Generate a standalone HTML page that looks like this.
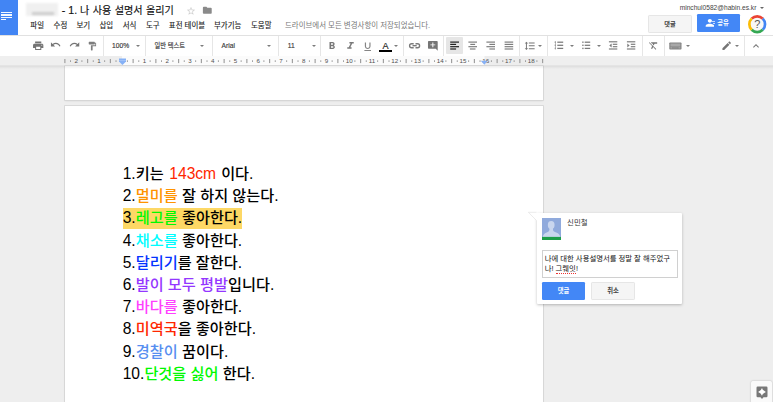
<!DOCTYPE html>
<html lang="ko">
<head>
<meta charset="utf-8">
<title>1. 나 사용 설명서 올리기</title>
<style>
html,body{margin:0;padding:0;}
body{width:773px;height:402px;overflow:hidden;background:#eee;position:relative;font-family:"Liberation Sans","Noto Sans CJK KR",sans-serif;color:#000;}
.abs{position:absolute;}
.t{position:absolute;white-space:nowrap;line-height:1;}
#header{left:0;top:0;width:773px;height:35px;background:#fff;border-bottom:1px solid #e1e1e1;}
#home{left:0;top:0;width:18px;height:35px;background:#4285f4;}
#home i{position:absolute;left:1px;height:1.3px;background:#fff;width:11px;opacity:.95}
.menu{font-size:7.45px;color:#1a1a1a;top:21.7px;-webkit-text-stroke:.12px #222}
#toolbar{left:0;top:36px;width:773px;height:20px;background:#fff;}
.sep{position:absolute;top:36px;width:1px;height:20px;background:#e6e6e6;}
.ic{position:absolute;}
.tb{font-size:6.7px;color:#3a3a3a;top:43.2px;-webkit-text-stroke:.15px #3a3a3a}
.car{position:absolute;width:0;height:0;border-left:2px solid transparent;border-right:2px solid transparent;border-top:2.1px solid #7c7c7c;top:45px;}
.btn{background:#f5f5f5;border:1px solid #e6e6e6;border-radius:1.2px;}
.page{position:absolute;left:65px;width:478px;background:#fff;box-shadow:0 0 0 .8px #d4d4d4,0 1px 2px rgba(0,0,0,.10);}
.ln{position:absolute;left:122.7px;white-space:nowrap;font-size:15.6px;line-height:22px;height:22px;color:#000}
.ln b.k{font-weight:500;font-size:15.2px}
</style>
</head>
<body>
<div class="abs" id="header"></div>
<div class="abs" id="home"><i style="top:11.9px"></i><i style="top:14.3px"></i><i style="top:16.6px"></i><i style="top:19px;width:5.2px"></i></div>
<div class="abs" style="left:25.5px;top:2.5px;width:32px;height:13.5px;background:#f0f0f0;filter:blur(1px)"></div>
<div class="abs" style="left:32px;top:12.3px;width:21.5px;height:3px;background:#cdcdcd;filter:blur(1.1px)"></div>
<div class="t" id="title" style="left:61.8px;top:5.1px;font-size:10.6px;color:#111;-webkit-text-stroke:.13px #111">- 1. <span class="k" style="font-size:10.1px;word-spacing:.6px">나 사용 설명서 올리기</span></div>
<svg class="ic" style="left:186.20px;top:5.70px;width:10px;height:10px" viewBox="0 0 24 24"><path fill="#cfcfcf" d="M22 9.240l-7.190-.620L12 2 9.190 8.630 2 9.240l5.460 4.730L5.820 21 12 17.270 18.180 21l-1.630-7.030L22 9.240zM12 15.400l-3.760 2.270 1-4.280-3.320-2.880 4.380-.380L12 6.100l1.710 4.040 4.380.380-3.320 2.880 1 4.280L12 15.400z"/></svg>
<svg class="ic" style="left:202.30px;top:5.30px;width:10.6px;height:10.6px" viewBox="0 0 24 24"><path fill="#8a8a8a" d="M10 4H4c-1.100 0-1.990.900-1.990 2L2 18c0 1.100.900 2 2 2h16c1.100 0 2-.900 2-2V8c0-1.100-.900-2-2-2h-8l-2-2z"/></svg>
<div class="t menu" id="m0" style="left:30.3px">파일</div>
<div class="t menu" id="m1" style="left:53.6px">수정</div>
<div class="t menu" id="m2" style="left:76.4px">보기</div>
<div class="t menu" id="m3" style="left:99.4px">삽입</div>
<div class="t menu" id="m4" style="left:122.7px">서식</div>
<div class="t menu" id="m5" style="left:146px">도구</div>
<div class="t menu" id="m6" style="left:168.8px">표전 테이블</div>
<div class="t menu" id="m7" style="left:214px">부가기능</div>
<div class="t menu" id="m8" style="left:251px">도움말</div>
<div class="t menu" id="saved" style="left:285px;color:#777;-webkit-text-stroke:0">드라이브에서 모든 변경사항이 저장되었습니다.</div>
<div class="t" id="email" style="left:679.7px;top:4.5px;font-size:6.63px;color:#444">minchul0582@habin.es.kr</div>
<div class="car" style="left:760px;top:7px;border-top-color:#666"></div>
<div class="abs btn" style="left:648px;top:14.5px;width:42px;height:16.5px;"><span class="t" id="cbtn" style="font-weight:bold;font-size:6.2px;color:#3c3c3c;left:50%;top:5.2px;transform:translateX(-50%)">댓글</span></div>
<div class="abs" style="left:696.5px;top:14.3px;width:43.5px;height:17.5px;background:#4387f6;border-radius:1.2px;"></div>
<svg class="ic" style="left:701.70px;top:16.80px;width:12.6px;height:11.6px" viewBox="0 0 24 24" preserveAspectRatio="none"><path fill="#fff" d="M15 12c2.210 0 4-1.790 4-4s-1.790-4-4-4-4 1.790-4 4 1.790 4 4 4zm0 2c-2.670 0-8 1.340-8 4v2h16v-2c0-2.660-5.330-4-8-4z"/></svg>
<div class="abs" style="left:712.3px;top:21.4px;width:2.4px;height:.9px;background:#fff;opacity:.7"></div><div class="abs" style="left:712.8px;top:23.2px;width:2px;height:.9px;background:#fff;opacity:.7"></div>
<div class="t" id="sbtn" style="left:717.2px;top:19.8px;font-weight:bold;font-size:6.35px;color:#fff">공유</div>
<svg class="abs" style="left:747px;top:13.8px;width:20.4px;height:20.4px" viewBox="-10.2 -10.2 20.4 20.4">
<circle r="7.6" fill="#f7f7f7"/>
<g fill="none" stroke-width="2.7">
<path stroke="#ea4335" d="M-5.55 -5.55A7.85 7.85 0 0 1 5.55 -5.55"/>
<path stroke="#4285f4" d="M5.55 -5.55A7.85 7.85 0 0 1 5.55 5.55"/>
<path stroke="#34a853" d="M5.55 5.55A7.85 7.85 0 0 1 -5.55 5.55"/>
<path stroke="#fbbc05" d="M-5.55 5.55A7.85 7.85 0 0 1 -5.55 -5.55"/>
</g>
<text x="0" y="3.9" text-anchor="middle" font-size="11" fill="#555" font-family="Liberation Sans, sans-serif">?</text>
</svg>
<div class="abs" id="toolbar"></div>
<div class="sep" style="left:103.2px"></div>
<div class="sep" style="left:144.9px"></div>
<div class="sep" style="left:212.0px"></div>
<div class="sep" style="left:278.2px"></div>
<div class="sep" style="left:320.2px"></div>
<div class="sep" style="left:403.2px"></div>
<div class="sep" style="left:443.0px"></div>
<div class="sep" style="left:519.3px"></div>
<div class="sep" style="left:547.0px"></div>
<div class="sep" style="left:641.8px"></div>
<div class="sep" style="left:664.2px"></div>
<div class="sep" style="left:743.9px"></div>
<svg class="ic" style="left:31.90px;top:39.80px;width:12.4px;height:11.4px" viewBox="0 0 24 24" preserveAspectRatio="none"><path fill="#757575" d="M19 8H5c-1.66 0-3 1.34-3 3v6h4v4h12v-4h4v-6c0-1.66-1.34-3-3-3zm-3 11H8v-5h8v5zm3-7c-.55 0-1-.45-1-1s.45-1 1-1 1 .45 1 1-.45 1-1 1zm-1-9H6v4h12V3z"/></svg>
<svg class="ic" style="left:50.00px;top:39.40px;width:11.2px;height:11.2px" viewBox="0 0 24 24"><path fill="#757575" d="M12.5 8c-2.65 0-5.05.99-6.9 2.6L2 7v9h9l-3.62-3.62c1.39-1.16 3.16-1.88 5.12-1.88 3.54 0 6.55 2.31 7.6 5.5l2.37-.78C21.08 11.03 17.15 8 12.5 8z"/></svg>
<svg class="ic" style="left:68.70px;top:39.40px;width:11.2px;height:11.2px" viewBox="0 0 24 24"><path fill="#757575" d="M18.4 10.6C16.55 8.99 14.15 8 11.5 8c-4.65 0-8.58 3.03-9.96 7.22L3.9 16c1.05-3.19 4.05-5.5 7.6-5.5 1.95 0 3.73.72 5.12 1.88L13 16h9V7l-3.6 3.6z"/></svg>
<svg class="ic" style="left:87.10px;top:40.60px;width:10.4px;height:10.4px" viewBox="0 0 24 24"><path fill="#7d7d7d" d="M18 4V3c0-.55-.45-1-1-1H5c-.55 0-1 .45-1 1v4c0 .55.45 1 1 1h12c.55 0 1-.45 1-1V6h1v4H9v11c0 .55.45 1 1 1h2c.55 0 1-.45 1-1v-9h8V4h-3z"/></svg>
<div class="t tb" id="zoom" style="left:112px">100%</div>
<div class="car" style="left:136.2px"></div>
<div class="t tb" id="style" style="left:154.5px;font-size:6.25px;top:43.4px">일반 텍스트</div>
<div class="car" style="left:200px"></div>
<div class="t tb" id="font" style="left:221.5px">Arial</div>
<div class="car" style="left:266.6px"></div>
<div class="t tb" id="fsize" style="left:287.8px">11</div>
<div class="car" style="left:311.5px"></div>
<svg class="ic" style="left:325.60px;top:40.00px;width:12px;height:12px" viewBox="0 0 24 24"><path fill="#777" d="M15.6 10.79c.97-.67 1.65-1.77 1.65-2.79 0-2.26-1.75-4-4-4H7v14h7.04c2.09 0 3.71-1.7 3.71-3.79 0-1.52-.86-2.82-2.15-3.42zM10 6.5h3c.83 0 1.5.67 1.5 1.5s-.67 1.5-1.5 1.5h-3v-3zm3.500 9H10v-3h3.500c.83 0 1.500.67 1.500 1.500s-.67 1.500-1.500 1.500z"/></svg>
<svg class="ic" style="left:343.70px;top:40.10px;width:13px;height:11.6px" viewBox="0 0 24 24" preserveAspectRatio="none"><path fill="#7a7a7a" d="M10 4v3h2.21l-3.42 8H6v3h8v-3h-2.21l3.42-8H18V4z"/></svg>
<svg class="ic" style="left:362.30px;top:40.70px;width:11.4px;height:11.4px" viewBox="0 0 24 24"><path fill="#858585" d="M12 17c3.31 0 6-2.69 6-6V3h-2.500v8c0 1.930-1.570 3.500-3.500 3.500S8.500 12.930 8.500 11V3H6v8c0 3.310 2.690 6 6 6zm-7 2v2h14v-2H5z"/></svg>
<div class="t" id="bigA" style="left:382.4px;top:41.6px;font-size:9.1px;color:#222;-webkit-text-stroke:.15px #222">A</div>
<div class="abs" style="left:379px;top:50.3px;width:13.3px;height:1.8px;background:#000"></div>
<div class="car" style="left:394.3px"></div>
<svg class="ic" style="left:426.75px;top:40.15px;width:11.7px;height:11.7px" viewBox="0 0 24 24"><path fill="#757575" d="M21.99 4c0-1.100-.890-2-1.990-2H4c-1.100 0-2 .900-2 2v12c0 1.100.900 2 2 2h14l4 4-.010-18zM17 11h-4v4h-2v-4H7V9h4V5h2v4h4v2z"/></svg>
<div class="abs" style="left:446.3px;top:37.4px;width:16.7px;height:16.4px;background:#e6e6e6;border-radius:1px"></div>
<svg class="abs" style="left:0;top:36px;width:773px;height:20px" viewBox="0 36 773 20"><rect x="450.20" y="41.50" width="8.80" height="1.2" fill="#222"/><rect x="450.20" y="43.80" width="5.90" height="1.2" fill="#222"/><rect x="450.20" y="46.10" width="8.80" height="1.2" fill="#222"/><rect x="450.20" y="48.40" width="5.90" height="1.2" fill="#222"/><rect x="468.40" y="41.52" width="8.60" height="1.15" fill="#7a7a7a"/><rect x="470.30" y="43.82" width="4.80" height="1.15" fill="#7a7a7a"/><rect x="468.40" y="46.12" width="8.60" height="1.15" fill="#7a7a7a"/><rect x="469.90" y="48.42" width="5.60" height="1.15" fill="#7a7a7a"/><rect x="486.40" y="41.52" width="8.60" height="1.15" fill="#7a7a7a"/><rect x="489.40" y="43.82" width="5.60" height="1.15" fill="#7a7a7a"/><rect x="486.40" y="46.12" width="8.60" height="1.15" fill="#7a7a7a"/><rect x="489.40" y="48.42" width="5.60" height="1.15" fill="#7a7a7a"/><rect x="504.60" y="41.52" width="8.60" height="1.15" fill="#7a7a7a"/><rect x="504.60" y="43.82" width="8.60" height="1.15" fill="#7a7a7a"/><rect x="504.60" y="46.12" width="8.60" height="1.15" fill="#7a7a7a"/><rect x="504.60" y="48.42" width="8.60" height="1.15" fill="#7a7a7a"/><rect x="557.30" y="41.58" width="5.90" height="1.25" fill="#7a7a7a"/><rect x="554.70" y="41.45" width="1.20" height="1.5" fill="#8a8a8a"/><rect x="557.30" y="44.67" width="5.90" height="1.25" fill="#7a7a7a"/><rect x="554.70" y="44.55" width="1.20" height="1.5" fill="#8a8a8a"/><rect x="557.30" y="47.77" width="5.90" height="1.25" fill="#7a7a7a"/><rect x="554.70" y="47.65" width="1.20" height="1.5" fill="#8a8a8a"/><rect x="555" y="41.400" width=".7" height="8" fill="#a0a0a0"/><rect x="584.70" y="41.58" width="5.50" height="1.25" fill="#7a7a7a"/><rect x="582.20" y="41.50" width="1.40" height="1.4" fill="#808080"/><rect x="584.70" y="44.67" width="5.50" height="1.25" fill="#7a7a7a"/><rect x="582.20" y="44.60" width="1.40" height="1.4" fill="#808080"/><rect x="584.70" y="47.77" width="5.50" height="1.25" fill="#7a7a7a"/><rect x="582.20" y="47.70" width="1.40" height="1.4" fill="#808080"/><rect x="608.90" y="41.22" width="8.40" height="1.15" fill="#7a7a7a"/><rect x="608.90" y="48.42" width="8.40" height="1.15" fill="#7a7a7a"/><rect x="612.80" y="43.72" width="4.50" height="1.15" fill="#7a7a7a"/><rect x="612.80" y="46.12" width="4.50" height="1.15" fill="#7a7a7a"/><path d="M609.300 45.500l2.300-2v4z" fill="#7a7a7a"/><rect x="626.90" y="41.22" width="8.40" height="1.15" fill="#7a7a7a"/><rect x="626.90" y="48.42" width="8.40" height="1.15" fill="#7a7a7a"/><rect x="630.80" y="43.72" width="4.50" height="1.15" fill="#7a7a7a"/><rect x="630.80" y="46.12" width="4.50" height="1.15" fill="#7a7a7a"/><path d="M629.600 45.500l-2.300-2v4z" fill="#7a7a7a"/><g fill="none" stroke="#7a7a7a" stroke-width="1.350"><path d="M413.700 43.700H411.600A2 2 0 0 0 411.600 47.700H413.700"/><path d="M415.500 43.700H417.600A2 2 0 0 1 417.600 47.700H415.500"/><path d="M412.500 45.700H416.700"/></g></svg>
<svg class="ic" style="left:524.20px;top:39.90px;width:11.6px;height:11.6px" viewBox="0 0 24 24"><path fill="#757575" d="M6 7h2.500L5 3.500 1.500 7H4v10H1.500L5 20.500 8.500 17H6V7zm4-2v2h12V5H10zm0 14h12v-2H10v2zm0-6h12v-2H10v2z"/></svg>
<div class="car" style="left:538.4px"></div>
<div class="car" style="left:570px"></div>
<div class="car" style="left:596.8px"></div>
<svg class="ic" style="left:648.00px;top:40.20px;width:11px;height:11px" viewBox="0 0 24 24"><path fill="#757575" d="M3.270 5L2 6.270l6.970 6.970L6.500 19h3l1.570-3.660L16.730 21 18 19.730 3.550 5.270 3.270 5zM6 5v.180L8.820 8h2.400l-.720 1.680 2.100 2.100L14.210 8H20V5H6z"/></svg>
<svg class="abs" style="left:669px;top:41.800px;width:13px;height:8px" viewBox="0 0 13 8"><rect x=".3" y=".4" width="12.200" height="7.200" rx=".8" fill="#828282"/><rect x="1.400" y="1.500" width="10" height="3" fill="#a8a8a8"/><rect x="1.400" y="5.200" width="2" height="1.300" fill="#a8a8a8"/><rect x="9.400" y="5.200" width="2" height="1.300" fill="#a8a8a8"/><rect x="4" y="5.200" width="4.800" height="1.300" fill="#949494"/></svg>
<div class="car" style="left:686.3px"></div>
<svg class="ic" style="left:720.60px;top:39.80px;width:11.4px;height:11.4px" viewBox="0 0 24 24"><path fill="#757575" d="M3 17.250V21h3.750L17.810 9.940l-3.750-3.750L3 17.250zM20.710 7.040c.390-.390.390-1.020 0-1.410l-2.340-2.340c-.390-.390-1.020-.390-1.410 0l-1.830 1.830 3.750 3.750 1.830-1.830z"/></svg>
<div class="car" style="left:735.2px"></div>
<svg class="ic" style="left:749.50px;top:40.00px;width:12px;height:12px" viewBox="0 0 24 24"><path fill="#757575" d="M12 8l-6 6 1.410 1.410L12 10.830l4.590 4.590L18 14z"/></svg>
<svg class="abs" id="ruler" style="left:0;top:56px;width:773px;height:10px" viewBox="0 0 773 10"><rect x="0" y="0" width="773" height="9.3" fill="#efefef"/><rect x="65" y="0" width="478.5" height="9.3" fill="#ededed"/><rect x="122" y="0" width="362.5" height="9.3" fill="#fbfbfb"/><rect x="0" y="9.3" width="773" height="0.7" fill="#e0e0e0"/><rect x="64.33" y="3" width="1.1" height="4.1" fill="#999"/><rect x="70.01" y="4.4" width="1" height="1.4" fill="#8c8c8c"/><text x="76.20" y="7.3" text-anchor="middle" font-size="6.2" fill="#505050" font-family="Liberation Sans, sans-serif">2</text><rect x="81.39" y="4.4" width="1" height="1.4" fill="#8c8c8c"/><rect x="87.08" y="3" width="1.1" height="4.1" fill="#999"/><rect x="92.76" y="4.4" width="1" height="1.4" fill="#8c8c8c"/><text x="98.95" y="7.3" text-anchor="middle" font-size="6.2" fill="#505050" font-family="Liberation Sans, sans-serif">1</text><rect x="104.14" y="4.4" width="1" height="1.4" fill="#8c8c8c"/><rect x="109.83" y="3" width="1.1" height="4.1" fill="#999"/><rect x="115.51" y="4.4" width="1" height="1.4" fill="#8c8c8c"/><rect x="126.89" y="4.4" width="1" height="1.4" fill="#8c8c8c"/><rect x="132.57" y="3" width="1.1" height="4.1" fill="#999"/><rect x="138.26" y="4.4" width="1" height="1.4" fill="#8c8c8c"/><text x="144.45" y="7.3" text-anchor="middle" font-size="6.2" fill="#505050" font-family="Liberation Sans, sans-serif">1</text><rect x="149.64" y="4.4" width="1" height="1.4" fill="#8c8c8c"/><rect x="155.32" y="3" width="1.1" height="4.1" fill="#999"/><rect x="161.01" y="4.4" width="1" height="1.4" fill="#8c8c8c"/><text x="167.20" y="7.3" text-anchor="middle" font-size="6.2" fill="#505050" font-family="Liberation Sans, sans-serif">2</text><rect x="172.39" y="4.4" width="1" height="1.4" fill="#8c8c8c"/><rect x="178.07" y="3" width="1.1" height="4.1" fill="#999"/><rect x="183.76" y="4.4" width="1" height="1.4" fill="#8c8c8c"/><text x="189.95" y="7.3" text-anchor="middle" font-size="6.2" fill="#505050" font-family="Liberation Sans, sans-serif">3</text><rect x="195.14" y="4.4" width="1" height="1.4" fill="#8c8c8c"/><rect x="200.82" y="3" width="1.1" height="4.1" fill="#999"/><rect x="206.51" y="4.4" width="1" height="1.4" fill="#8c8c8c"/><text x="212.70" y="7.3" text-anchor="middle" font-size="6.2" fill="#505050" font-family="Liberation Sans, sans-serif">4</text><rect x="217.89" y="4.4" width="1" height="1.4" fill="#8c8c8c"/><rect x="223.57" y="3" width="1.1" height="4.1" fill="#999"/><rect x="229.26" y="4.4" width="1" height="1.4" fill="#8c8c8c"/><text x="235.45" y="7.3" text-anchor="middle" font-size="6.2" fill="#505050" font-family="Liberation Sans, sans-serif">5</text><rect x="240.64" y="4.4" width="1" height="1.4" fill="#8c8c8c"/><rect x="246.32" y="3" width="1.1" height="4.1" fill="#999"/><rect x="252.01" y="4.4" width="1" height="1.4" fill="#8c8c8c"/><text x="258.20" y="7.3" text-anchor="middle" font-size="6.2" fill="#505050" font-family="Liberation Sans, sans-serif">6</text><rect x="263.39" y="4.4" width="1" height="1.4" fill="#8c8c8c"/><rect x="269.07" y="3" width="1.1" height="4.1" fill="#999"/><rect x="274.76" y="4.4" width="1" height="1.4" fill="#8c8c8c"/><text x="280.95" y="7.3" text-anchor="middle" font-size="6.2" fill="#505050" font-family="Liberation Sans, sans-serif">7</text><rect x="286.14" y="4.4" width="1" height="1.4" fill="#8c8c8c"/><rect x="291.82" y="3" width="1.1" height="4.1" fill="#999"/><rect x="297.51" y="4.4" width="1" height="1.4" fill="#8c8c8c"/><text x="303.70" y="7.3" text-anchor="middle" font-size="6.2" fill="#505050" font-family="Liberation Sans, sans-serif">8</text><rect x="308.89" y="4.4" width="1" height="1.4" fill="#8c8c8c"/><rect x="314.57" y="3" width="1.1" height="4.1" fill="#999"/><rect x="320.26" y="4.4" width="1" height="1.4" fill="#8c8c8c"/><text x="326.45" y="7.3" text-anchor="middle" font-size="6.2" fill="#505050" font-family="Liberation Sans, sans-serif">9</text><rect x="331.64" y="4.4" width="1" height="1.4" fill="#8c8c8c"/><rect x="337.32" y="3" width="1.1" height="4.1" fill="#999"/><rect x="343.01" y="4.4" width="1" height="1.4" fill="#8c8c8c"/><text x="349.20" y="7.3" text-anchor="middle" font-size="6.2" fill="#505050" font-family="Liberation Sans, sans-serif">10</text><rect x="354.39" y="4.4" width="1" height="1.4" fill="#8c8c8c"/><rect x="360.07" y="3" width="1.1" height="4.1" fill="#999"/><rect x="365.76" y="4.4" width="1" height="1.4" fill="#8c8c8c"/><text x="371.95" y="7.3" text-anchor="middle" font-size="6.2" fill="#505050" font-family="Liberation Sans, sans-serif">11</text><rect x="377.14" y="4.4" width="1" height="1.4" fill="#8c8c8c"/><rect x="382.82" y="3" width="1.1" height="4.1" fill="#999"/><rect x="388.51" y="4.4" width="1" height="1.4" fill="#8c8c8c"/><text x="394.70" y="7.3" text-anchor="middle" font-size="6.2" fill="#505050" font-family="Liberation Sans, sans-serif">12</text><rect x="399.89" y="4.4" width="1" height="1.4" fill="#8c8c8c"/><rect x="405.57" y="3" width="1.1" height="4.1" fill="#999"/><rect x="411.26" y="4.4" width="1" height="1.4" fill="#8c8c8c"/><text x="417.45" y="7.3" text-anchor="middle" font-size="6.2" fill="#505050" font-family="Liberation Sans, sans-serif">13</text><rect x="422.64" y="4.4" width="1" height="1.4" fill="#8c8c8c"/><rect x="428.32" y="3" width="1.1" height="4.1" fill="#999"/><rect x="434.01" y="4.4" width="1" height="1.4" fill="#8c8c8c"/><text x="440.20" y="7.3" text-anchor="middle" font-size="6.2" fill="#505050" font-family="Liberation Sans, sans-serif">14</text><rect x="445.39" y="4.4" width="1" height="1.4" fill="#8c8c8c"/><rect x="451.07" y="3" width="1.1" height="4.1" fill="#999"/><rect x="456.76" y="4.4" width="1" height="1.4" fill="#8c8c8c"/><text x="462.95" y="7.3" text-anchor="middle" font-size="6.2" fill="#505050" font-family="Liberation Sans, sans-serif">15</text><rect x="468.14" y="4.4" width="1" height="1.4" fill="#8c8c8c"/><rect x="473.82" y="3" width="1.1" height="4.1" fill="#999"/><rect x="479.51" y="4.4" width="1" height="1.4" fill="#8c8c8c"/><text x="485.70" y="7.3" text-anchor="middle" font-size="6.2" fill="#505050" font-family="Liberation Sans, sans-serif">16</text><rect x="490.89" y="4.4" width="1" height="1.4" fill="#8c8c8c"/><rect x="496.57" y="3" width="1.1" height="4.1" fill="#999"/><rect x="502.26" y="4.4" width="1" height="1.4" fill="#8c8c8c"/><text x="508.45" y="7.3" text-anchor="middle" font-size="6.2" fill="#505050" font-family="Liberation Sans, sans-serif">17</text><rect x="513.64" y="4.4" width="1" height="1.4" fill="#8c8c8c"/><rect x="519.33" y="3" width="1.1" height="4.1" fill="#999"/><rect x="525.01" y="4.4" width="1" height="1.4" fill="#8c8c8c"/><text x="531.20" y="7.3" text-anchor="middle" font-size="6.2" fill="#505050" font-family="Liberation Sans, sans-serif">18</text><rect x="536.39" y="4.4" width="1" height="1.4" fill="#8c8c8c"/><rect x="542.08" y="3" width="1.1" height="4.1" fill="#999"/><path d="M119 2.400h7v3l-3.500 3.500-3.500-3.500z" fill="#86b1f6"/><rect x="119" y="4.200" width="7" height=".7" fill="#a9c7f9"/><path d="M480.800 4.800h7l-3.500 3.900z" fill="#86b1f6"/></svg>
<div class="abs" style="left:0;top:66px;width:773px;height:2.5px;background:linear-gradient(rgba(0,0,0,.07),rgba(0,0,0,0));z-index:3"></div>
<div class="page" style="top:66px;height:33.5px"></div>
<div class="page" style="top:105.7px;height:300px"></div>
<div class="abs" style="left:122.6px;top:207.8px;width:119.3px;height:21.7px;background:#fdd865"></div>
<div class="ln" id="ln0" style="top:162.90px">1.<b class="k">키는</b> <span style="color:#ff2600;margin-left:1.3px;margin-right:.7px">143cm</span> <b class="k">이다</b>.</div>
<div class="ln" id="ln1" style="top:185.10px">2.<b class="k" style="color:#ff9300">멀미를</b> <b class="k">잘 하지 않는다</b>.</div>
<div class="ln" id="ln2" style="top:207.30px">3.<b class="k" style="color:#00f900">레고를</b> <b class="k">좋아한다</b>.</div>
<div class="ln" id="ln3" style="top:229.50px">4.<b class="k" style="color:#00fdff">채소를</b> <b class="k">좋아한다</b>.</div>
<div class="ln" id="ln4" style="top:251.70px">5.<b class="k" style="color:#0433ff">달리기</b><b class="k">를 잘한다</b>.</div>
<div class="ln" id="ln5" style="top:273.90px">6.<b class="k" style="color:#9437ff">발이 모두 평발</b><b class="k">입니다</b>.</div>
<div class="ln" id="ln6" style="top:296.10px">7.<b class="k" style="color:#ff40ff">바다를</b> <b class="k">좋아한다</b>.</div>
<div class="ln" id="ln7" style="top:318.30px">8.<b class="k" style="color:#ff2600">미역국</b><b class="k">을 좋아한다</b>.</div>
<div class="ln" id="ln8" style="top:340.50px">9.<b class="k" style="color:#578ef0">경찰이</b> <b class="k">꿈이다</b>.</div>
<div class="ln" id="ln9" style="top:362.70px">10.<b class="k" style="color:#00f900">단것을 싫어</b> <b class="k">한다</b>.</div>
<div class="abs" id="cbox" style="left:536.5px;top:212.6px;width:145px;height:91.3px;background:#fff;box-shadow:0 1px 3px rgba(0,0,0,.25);border-radius:1px"></div>
<svg class="abs" style="left:527px;top:211px;width:12px;height:12px" viewBox="0 0 12 12"><path d="M1.4 1.3H10V10z" fill="#fff"/><path d="M9.500 1.300H1.400L9.500 9.500" fill="none" stroke="#ddd" stroke-width=".6"/></svg>
<div class="abs" style="left:536.5px;top:212.8px;width:4px;height:10px;background:#fff"></div>
<svg class="abs" style="left:542px;top:217.800px;width:19.200px;height:22.400px" viewBox="0 0 19.200 22.400"><rect width="19.200" height="22.400" fill="#90aadc"/><ellipse cx="9.200" cy="7" rx="3.400" ry="4.100" fill="#c9d6ee"/><path d="M7.400 9.500h3.600v2.300c0 1.200 1 1.800 2.600 2.400 2.600 1 4.600 2.300 4.600 4.800H.8c0-2.500 2-3.800 4.400-4.800 1.500-.6 2.200-1.200 2.200-2.400z" fill="#c9d6ee"/><rect y="18.900" width="19.200" height="3.500" fill="#1e9e4a"/></svg>
<div class="t" id="cname" style="left:567.1px;top:219.100px;font-size:7.4px;color:#333">신민철</div>
<div class="abs" style="left:542px;top:250px;width:133.5px;height:25.5px;border:1px solid #d0d0d0;background:#fff;box-sizing:content-box"></div>
<div class="t" id="ct1" style="left:544.7px;top:254.8px;font-size:7.36px;color:#111">나에 대한 사용설명서를 정말 잘 해주었구</div>
<div class="t" id="ct2" style="left:544.7px;top:265.4px;font-size:7.36px;color:#111">나! <span style="border-bottom:1px dotted #e33">그뤠잇</span>!</div>
<div class="abs" style="left:542px;top:282.300px;width:43.200px;height:17.600px;background:#4387f6;border-radius:1.2px"></div>
<div class="t" id="cb1" style="left:563.6px;top:288.1px;font-size:6.3px;font-weight:bold;color:#fff;transform:translateX(-50%)">댓글</div>
<div class="abs btn" style="left:591.200px;top:282.300px;width:42px;height:15.6px"></div>
<div class="t" id="cb2" style="left:613.1px;top:288.1px;font-size:6.3px;font-weight:bold;color:#444;transform:translateX(-50%)">취소</div>

<div class="abs" style="left:751px;top:380.500px;width:21.200px;height:24px;background:#fafafa;box-shadow:0 0 2px rgba(0,0,0,.25);border-radius:1.500px"></div>
<svg class="abs" style="left:755.600px;top:385.700px;width:12px;height:13.500px" viewBox="0 0 12 13.500"><path d="M1.700.5h8.600a1.200 1.200 0 0 1 1.200 1.200v8.400a1.200 1.200 0 0 1-1.200 1.200H7.500L6 12.900 4.500 11.300H1.700A1.200 1.200 0 0 1 .5 10.100V1.700A1.200 1.200 0 0 1 1.700.5z" fill="#787878"/><path d="M6 2Q6.900 5 9.900 5.900 6.900 6.800 6 9.800 5.100 6.800 2.100 5.900 5.100 5 6 2z" fill="#fff"/></svg>
</body>
</html>
